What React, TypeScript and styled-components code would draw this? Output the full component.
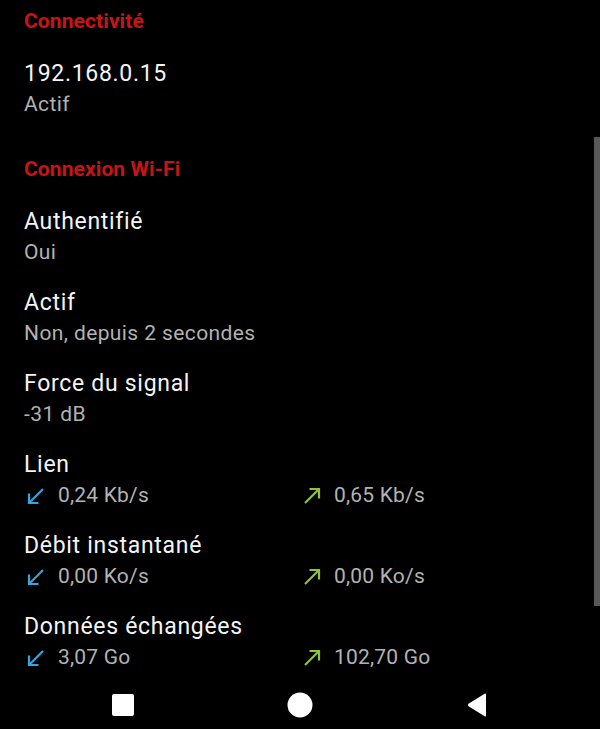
import React from "react";
import styled, { createGlobalStyle } from "styled-components";

const GlobalStyle = createGlobalStyle`
  html, body {
    margin: 0;
    padding: 0;
    background: #000;
  }
  body {
    font-family: Roboto, "Noto Sans", "Liberation Sans", sans-serif;
  }
`;

type Rate = { down: string; up: string };
type Item = { title: string; summary?: string; rate?: Rate };
type Section = { header: string; items: Item[] };

const SECTIONS: Section[] = [
  {
    header: "Connectivité",
    items: [{ title: "192.168.0.15", summary: "Actif" }],
  },
  {
    header: "Connexion Wi-Fi",
    items: [
      { title: "Authentifié", summary: "Oui" },
      { title: "Actif", summary: "Non, depuis 2 secondes" },
      { title: "Force du signal", summary: "-31 dB" },
      { title: "Lien", rate: { down: "0,24 Kb/s", up: "0,65 Kb/s" } },
      { title: "Débit instantané", rate: { down: "0,00 Ko/s", up: "0,00 Ko/s" } },
      { title: "Données échangées", rate: { down: "3,07 Go", up: "102,70 Go" } },
    ],
  },
];

export default function App() {
  return (
    <>
      <GlobalStyle />
      <Screen>
        <Content>
          {SECTIONS.map((section) => (
            <SectionBlock key={section.header}>
              <Header>{section.header}</Header>
              {section.items.map((item) => (
                <Row key={item.title}>
                  <Title>{item.title}</Title>
                  {item.summary && <Summary>{item.summary}</Summary>}
                  {item.rate && (
                    <RateGrid>
                      <RateCell>
                        <Arrow dir="down" />
                        {item.rate.down}
                      </RateCell>
                      <RateCell>
                        <Arrow dir="up" />
                        {item.rate.up}
                      </RateCell>
                    </RateGrid>
                  )}
                </Row>
              ))}
            </SectionBlock>
          ))}
          <ScrollThumb />
        </Content>
        <NavBar>
          <svg width="24" height="24" viewBox="0 0 24 24">
            <rect x="1" y="1" width="22" height="22" rx="2" fill="#fff" />
          </svg>
          <svg width="26" height="26" viewBox="0 0 26 26">
            <circle cx="13" cy="13" r="12.5" fill="#fff" />
          </svg>
          <svg width="24" height="26" viewBox="0 0 24 26">
            <path
              d="M21 2.5 L21 23.5 Q21 25 19.6 24.2 L3.5 14.2 Q2.2 13 3.5 11.8 L19.6 1.8 Q21 1 21 2.5 Z"
              fill="#fff"
            />
          </svg>
        </NavBar>
      </Screen>
    </>
  );
}

const Arrow = ({ dir }: { dir: "up" | "down" }) => (
  <ArrowIcon width="24" height="24" viewBox="0 0 24 24" fill="none">
    {dir === "down" ? (
      <g stroke="#33a7dc" strokeWidth="2.2">
        <path d="M19 5 L5.5 18.5" />
        <path d="M5 9.5 V19 H14.5" />
      </g>
    ) : (
      <g stroke="#8cc43f" strokeWidth="2.2">
        <path d="M5 19 L18.5 5.5" />
        <path d="M9.5 5 H19 V14.5" />
      </g>
    )}
  </ArrowIcon>
);

const Screen = styled.div`
  width: 600px;
  height: 729px;
  display: flex;
  flex-direction: column;
  background: #000;
  overflow: hidden;
`;

const Content = styled.div`
  position: relative;
  flex: 1;
  overflow: hidden;
  padding-top: 9px;
`;

const SectionBlock = styled.section`
  & + & {
    margin-top: 27px;
  }
`;

const Header = styled.div`
  padding: 0 24px;
  height: 24px;
  line-height: 24px;
  margin-bottom: 16px;
  font-size: 21px;
  font-weight: 700;
  letter-spacing: 0.1px;
  color: #c81414;
`;

const Row = styled.div`
  padding: 10px 24px 11px;
`;

const Title = styled.div`
  line-height: 30px;
  font-size: 23px;
  letter-spacing: 0.7px;
  color: #f4f4f4;
`;

const Summary = styled.div`
  line-height: 30px;
  font-size: 21px;
  letter-spacing: 0.4px;
  color: #b2b2b2;
`;

const RateGrid = styled.div`
  display: grid;
  grid-template-columns: 1fr 1fr;
`;

const RateCell = styled.div`
  display: flex;
  align-items: center;
  line-height: 30px;
  font-size: 21px;
  letter-spacing: 0.2px;
  color: #b2b2b2;
`;

const ArrowIcon = styled.svg`
  flex: none;
  margin: 1px 10px 0 0;
`;

const ScrollThumb = styled.div`
  position: absolute;
  right: 0;
  top: 137px;
  width: 6px;
  height: 469px;
  background: #585858;
`;

const NavBar = styled.nav`
  flex: none;
  height: 48px;
  display: flex;
  align-items: center;
  justify-content: space-between;
  padding: 0 111px;
`;
